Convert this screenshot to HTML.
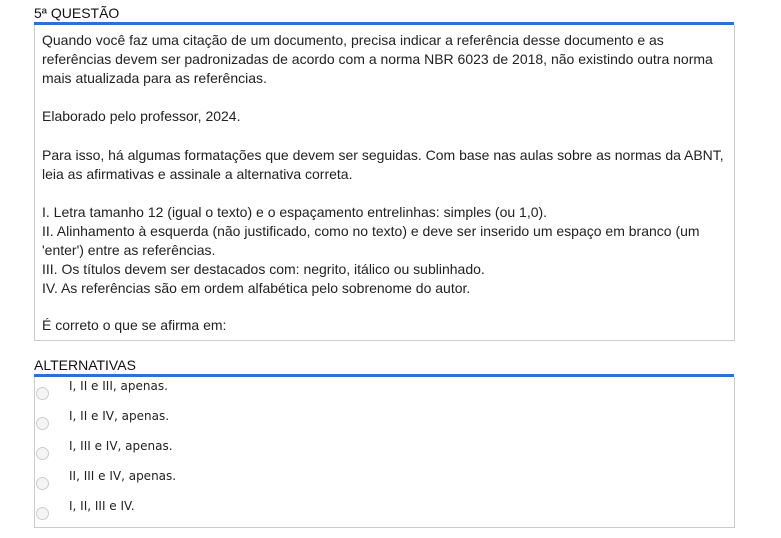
<!DOCTYPE html>
<html><head><meta charset="utf-8"><style>
body{margin:0;background:#fff;font-family:"Liberation Sans",sans-serif;color:#222;}
.h{position:absolute;left:34px;font-size:14px;color:#111;}
.bar{position:absolute;left:34px;width:700px;height:3px;background:#2a6fdb;}
.box{position:absolute;left:34px;width:699px;border:1px solid #ccc;border-top:none;}
.q{top:25px;height:315px;}
.q p{position:absolute;left:7px;margin:0;font-size:14px;line-height:19px;white-space:nowrap;color:#222;}
.a{top:377px;height:150px;}
.opt{position:absolute;left:34px;font-family:"DejaVu Sans",sans-serif;font-size:12px;color:#222;}
.r{position:absolute;left:1px;width:11px;height:11px;border:1px solid #ccc;border-radius:50%;background:#f4f4f4;}
</style></head><body>
<div class="h" style="top:5px">5ª QUESTÃO</div>
<div class="bar" style="top:22px"></div>
<div class="box q">
<p style="top:6px">Quando você faz uma citação de um documento, precisa indicar a referência desse documento e as<br>referências devem ser padronizadas de acordo com a norma NBR 6023 de 2018, não existindo outra norma<br>mais atualizada para as referências.</p>
<p style="top:82px">Elaborado pelo professor, 2024.</p>
<p style="top:121px">Para isso, há algumas formatações que devem ser seguidas. Com base nas aulas sobre as normas da ABNT,<br>leia as afirmativas e assinale a alternativa correta.</p>
<p style="top:178px">I. Letra tamanho 12 (igual o texto) e o espaçamento entrelinhas: simples (ou 1,0).<br>II. Alinhamento à esquerda (não justificado, como no texto) e deve ser inserido um espaço em branco (um<br>'enter') entre as referências.<br>III. Os títulos devem ser destacados com: negrito, itálico ou sublinhado.<br>IV. As referências são em ordem alfabética pelo sobrenome do autor.</p>
<p style="top:291px">É correto o que se afirma em:</p>
</div>
<div class="h" style="top:357px">ALTERNATIVAS</div>
<div class="bar" style="top:374px"></div>
<div class="box a">
<div class="r" style="top:10px"></div><div class="opt" style="top:2px">I, II e III, apenas.</div>
<div class="r" style="top:40px"></div><div class="opt" style="top:32px">I, II e IV, apenas.</div>
<div class="r" style="top:70px"></div><div class="opt" style="top:62px">I, III e IV, apenas.</div>
<div class="r" style="top:100px"></div><div class="opt" style="top:92px">II, III e IV, apenas.</div>
<div class="r" style="top:130px"></div><div class="opt" style="top:122px">I, II, III e IV.</div>
</div>
</body></html>
